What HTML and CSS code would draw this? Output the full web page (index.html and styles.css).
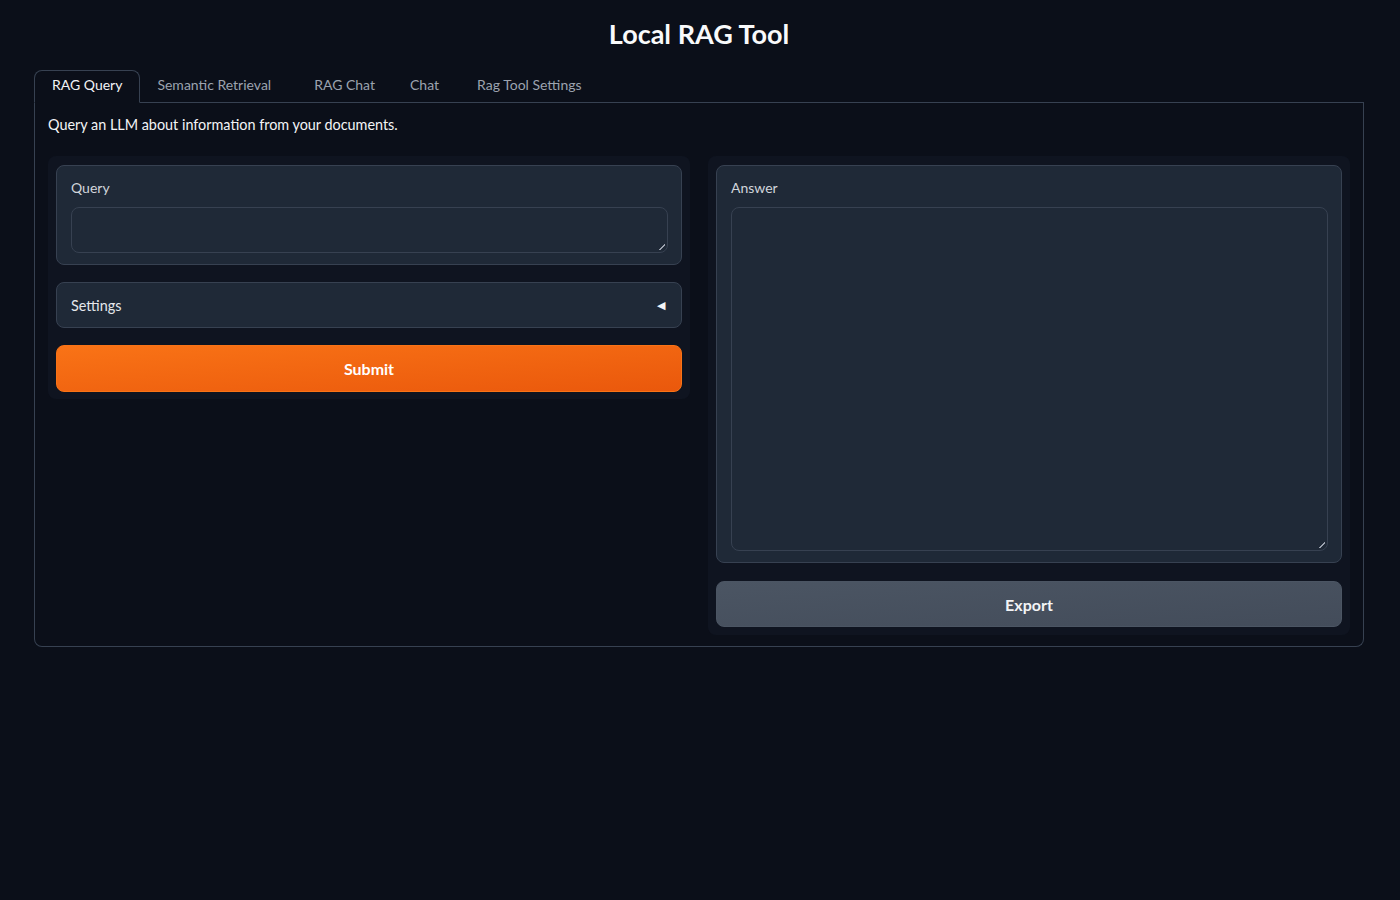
FILE: index.html
```html
<!DOCTYPE html>
<html>
<head>
<meta charset="utf-8">
<link rel="stylesheet" href="styles.css">
</head>
<body>
<div class="app">
  <h1 class="title">Local RAG Tool</h1>
  <div class="tabs">
    <div class="tab-nav">
      <button class="tab selected">RAG Query</button>
      <button class="tab">Semantic Retrieval</button>
      <button class="tab">RAG Chat</button>
      <button class="tab">Chat</button>
      <button class="tab">Rag Tool Settings</button>
      <div class="tab-fill"></div>
    </div>
    <div class="tab-body">
      <p class="desc">Query an LLM about information from your documents.</p>
      <div class="row">
        <div class="panel">
          <div class="block">
            <label class="label">Query</label>
            <div class="textarea short"><span class="grip"></span></div>
          </div>
          <div class="block accordion">
            <span class="acc-label">Settings</span>
            <span class="acc-icon">&#9664;</span>
          </div>
          <button class="btn primary">Submit</button>
        </div>
        <div class="panel panel-right">
          <div class="block">
            <label class="label">Answer</label>
            <div class="textarea tall"><span class="grip"></span></div>
          </div>
          <button class="btn secondary">Export</button>
        </div>
      </div>
    </div>
  </div>
</div>
</body>
</html>
```

FILE: styles.css
```css
* { box-sizing: border-box; }
html, body {
  margin: 0;
  background: #0b0f19;
  color: #f3f4f6;
  font-family: "Lato", "Open Sans", sans-serif;
}
.app {
  padding: 0 36px 0 34px;
}
.title {
  margin: 0;
  padding-top: 16px;
  height: 70px;
  text-align: center;
  font-size: 27px;
  font-weight: 700;
  line-height: 36px;
  color: #f9fafb;
}
.tab-nav {
  display: flex;
  height: 33px;
}
.tab {
  background: none;
  border: none;
  border-bottom: 1px solid #374151;
  color: #9ca3af;
  font-family: inherit;
  font-size: 14px;
  padding: 0 19px 3px;
  margin: 0;
  height: 33px;
  line-height: 26px;
  cursor: pointer;
}
.tab:nth-child(2) { padding-left: 17px; padding-right: 21px; }
.tab:nth-child(3) { padding-left: 22px; padding-right: 16px; }
.tab.selected {
  color: #f3f4f6;
  border: 1px solid #374151;
  border-bottom: 1px solid transparent;
  border-radius: 8px 8px 0 0;
  padding: 0 17px 3px;
}
.tab-fill {
  flex: 1;
  border-bottom: 1px solid #374151;
}
.tab-body {
  border: 1px solid #374151;
  border-top: none;
  border-radius: 0 0 8px 8px;
  padding: 12px 13px 11px 13px;
}
.desc {
  margin: 0 0 21px;
  font-size: 14.4px;
  line-height: 20px;
  color: #f3f4f6;
}
.row {
  display: flex;
  gap: 18px;
  align-items: flex-start;
}
.panel {
  flex: 1;
  background: #0f1420;
  border-radius: 8px;
  padding: 9px 8px 7px 8px;
  display: flex;
  flex-direction: column;
  gap: 17px;
}
.panel-right {
  padding-bottom: 8px;
  gap: 18px;
}
.block {
  background: #1f2937;
  border: 1px solid #374151;
  border-radius: 8px;
  padding: 12px 13px 11px 14px;
}
.label {
  display: block;
  font-size: 14px;
  line-height: 20px;
  color: #d1d5db;
  margin-bottom: 9px;
}
.textarea {
  position: relative;
  background: #1f2937;
  border: 1px solid #374151;
  border-radius: 8px;
}
.textarea.short { height: 46px; }
.textarea.tall { height: 344px; }
.grip {
  position: absolute;
  right: 2px;
  bottom: 2px;
  width: 6px;
  height: 6px;
  background: linear-gradient(135deg, transparent 45%, #9ca3af 45%, #9ca3af 65%, transparent 65%);
}
.accordion {
  display: flex;
  align-items: center;
  justify-content: space-between;
  height: 46px;
  padding: 0 16px 0 14px;
}
.acc-label {
  font-size: 14.4px;
  color: #e5e7eb;
}
.acc-icon {
  font-size: 11px;
  color: #f3f4f6;
}
.btn {
  height: 47px;
  border-radius: 8px;
  font-family: inherit;
  font-size: 16px;
  font-weight: 700;
  color: #ffffff;
  cursor: pointer;
}
.btn.primary {
  border: 1px solid #f97316;
  background: linear-gradient(to bottom right, #f97316, #ea580c);
}
.btn.secondary {
  height: 46px;
  border: 1px solid #4b5563;
  background: linear-gradient(to bottom right, #4b5563, #434c5a);
  color: #f3f4f6;
}
```
